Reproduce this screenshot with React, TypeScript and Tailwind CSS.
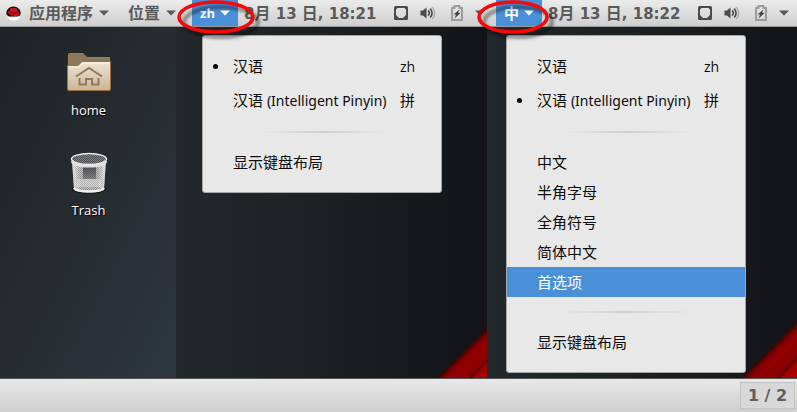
import clsx from "clsx";

const LAYOUT_LABEL = "显示键盘布局";

const Caret = ({ className = "" }: any) => {
  return (
    <svg viewBox="0 0 10 6" className={`w-[10px] h-[6px] shrink-0 ${className}`}>
      <path d="M0 0.5h10L5 5.5z" fill="currentColor" />
    </svg>
  );
};

const HatLogo = () => {
  return (
    <svg viewBox="0 0 15 15" className="w-[15px] h-[15px] shrink-0">
      <path d="M0.3 7.500C0.3 3.500 3.500 0.5 7.5 0.5S14.7 3.500 14.7 7.500L13.500 10.500 1.500 10.500z" fill="#1c0709" />
      <path d="M0.800 8.800C3 12.500 9 12.500 14.200 9.500 13.400 13 10.900 14.700 7.5 14.700 3.900 14.700 1.100 12 0.800 8.800z" fill="#fff" />
      <path
        d="M4.200 2.800C5 1.400 6.400 2.200 7.300 2c1-.5 2.600-.4 3.400.7.6.9.9 2.200 1.100 3.400 1.300.6 2.200 1.500 2 2.400-.5 1.800-4.300 2-7.100 1.100C4.300 8.900 1.800 7.500 1.700 6.200c0-.9 1-1.100 1.900-1z"
        fill="#c8141e"
      />
      <path d="M3.600 5.400c.8 1.300 4.500 2.400 7.400 1.600" stroke="#5a0a0e" strokeWidth="0.800" fill="none" />
    </svg>
  );
};

const TrayIcons = () => {
  return (
    <>
      <button aria-label="Display" className="w-[14px] ml-[18px] shrink-0">
        <svg viewBox="0 0 14 14" className="w-[14px] h-[14px]">
          <rect x="1" y="1" width="12" height="12" rx="0.500" fill="none" stroke="#4a4a4a" strokeWidth="2" />
          <path d="M2 2h1.500L2 3.500zM12 2h-1.500L12 3.500zM2 12V9l3 3zM12 12V9l-3 3z" fill="#4a4a4a" />
        </svg>
      </button>
      <button aria-label="Volume" className="w-[16px] ml-[12px] shrink-0">
        <svg viewBox="0 0 16 14" className="w-[16px] h-[14px]">
          <path d="M0.500 4.500H3L6.500 1.500v11L3 9.500H0.500z" fill="#4a4a4a" />
          <g fill="none" strokeWidth="1.600">
            <path d="M8 4.500a3 3 0 0 1 0 5" stroke="#4a4a4a" />
            <path d="M10.200 2.500a6.500 6.500 0 0 1 0 9" stroke="#4a4a4a" />
            <path d="M12.200 1a9 9 0 0 1 0 12" stroke="#b0b0b0" />
          </g>
        </svg>
      </button>
      <button aria-label="Battery" className="w-[12px] ml-[15px] shrink-0">
        <svg viewBox="0 0 12 16" className="w-[12px] h-[16px]">
          <path d="M1 3h2.500V1h5v2H11v12H1z" fill="none" stroke="#9c9c9c" strokeWidth="2" />
          <path d="M8.500 4.500L2.500 9.500h2.400L3.800 13.200l5.900-5.400H7z" fill="#444" />
        </svg>
      </button>
      <Caret className="ml-[12px] text-[#555]" />
    </>
  );
};

const Ring = ({ rx = 36, className = "" }: any) => {
  return (
    <svg
      viewBox="0 0 96 44"
      className={`absolute top-0 z-20 w-[96px] h-[44px] max-w-none pointer-events-none ${className}`}
    >
      <defs>
        <filter id="ring-shadow" x="-10%" y="-20%" width="120%" height="150%">
          <feGaussianBlur stdDeviation="1.500" />
        </filter>
      </defs>
      <ellipse
        cx="50"
        cy="22"
        rx={rx}
        ry="15"
        fill="none"
        stroke="#000"
        strokeOpacity="0.4"
        strokeWidth="4"
        filter="url(#ring-shadow)"
      />
      <ellipse cx="45" cy="17" rx={rx} ry="15" fill="none" stroke="#fb0707" strokeWidth="3.500" />
    </svg>
  );
};

const StatusBar = ({ label, time, ring, className = "" }: any) => {
  return (
    <div className={`flex items-center min-w-0 ${className}`}>
      <div className="relative self-stretch shrink-0">
        <button className="flex items-center justify-center gap-[5px] w-[46px] h-full bg-[#4a90d9] text-white text-[13px] leading-[20px]">
          {label}
          <Caret />
        </button>
        {ring}
      </div>
      <div className="w-[132px] ml-[6px] shrink-0 whitespace-nowrap">
        <Digits>8</Digits>月<Digits> 13 </Digits>日<Digits>, {time}</Digits>
      </div>
      <TrayIcons />
    </div>
  );
};

const Digits = ({ children }: any) => {
  return <span className="font-['DejaVu_Sans',sans-serif] text-[15px]">{children}</span>;
};

const Separator = () => {
  return (
    <div className="h-[30px] flex items-center justify-center" role="separator">
      <div className="w-[130px] h-[2px] bg-linear-to-r from-transparent via-[#cfcfcf] to-transparent" />
    </div>
  );
};

const SourceItem = ({ name, code, active = false }: any) => {
  return (
    <button className="flex items-center w-full h-[34px] pl-[8px] pr-[25px] text-left">
      <span className="w-[22px] flex">
        {active && <span className="w-[5px] h-[5px] ml-[2px] rounded-full bg-black" />}
      </span>
      <span className="flex-1 whitespace-nowrap">{name}</span>
      <span className="w-[16px]">{code}</span>
    </button>
  );
};

const MenuItem = ({ children, selected = false }: any) => {
  return (
    <button
      className={clsx(
        "block w-full h-[30px] pl-[30px] text-left",
        selected && "bg-[#4a90d9] text-white"
      )}
    >
      {children}
    </button>
  );
};

const InputMenu = ({ active, items = [], className = "" }: any) => {
  return (
    <div
      className={`relative z-10 w-[240px] mt-[8px] pt-[13px] pb-[15px] rounded-[3px] border border-[#a8a8a8] bg-[#e8e8e8] text-[15px] leading-[20px] text-[#0c0c0c] ${className}`}
    >
      <SourceItem name="汉语" code={<span className="text-[14px]">zh</span>} active={active === 0} />
      <SourceItem
        name={
          <>
            汉语 <span className="font-['Noto_Sans',sans-serif] text-[14px]">(Intelligent Pinyin)</span>
          </>
        }
        code="拼"
        active={active === 1}
      />
      <Separator />
      {items.map((item: string) => (
        <MenuItem key={item} selected={item === "首选项"}>
          {item}
        </MenuItem>
      ))}
      {items.length > 0 && <Separator />}
      <MenuItem>{LAYOUT_LABEL}</MenuItem>
    </div>
  );
};

const RedCorner = ({ className = "" }: any) => {
  return (
    <svg viewBox="0 0 56 56" className={`absolute bottom-0 ${className}`}>
      <defs>
        <linearGradient id="stripe" x1="0.5" y1="0.5" x2="1" y2="1">
          <stop offset="0" stopColor="#3a0304" />
          <stop offset="0.15" stopColor="#850000" />
          <stop offset="0.3" stopColor="#920000" />
          <stop offset="0.6" stopColor="#8a0000" />
          <stop offset="0.68" stopColor="#5c0000" />
          <stop offset="0.7" stopColor="#a00000" />
          <stop offset="1" stopColor="#b00000" />
        </linearGradient>
      </defs>
      <path d="M0 56L56 0V56z" fill="url(#stripe)" />
    </svg>
  );
};

const FolderIcon = () => {
  return (
    <svg viewBox="0 0 44 40" className="w-[44px] h-[40px]">
      <defs>
        <linearGradient id="folder" x1="0" y1="0" x2="0" y2="1">
          <stop offset="0" stopColor="#eee3d5" />
          <stop offset="1" stopColor="#ccb597" />
        </linearGradient>
      </defs>
      <path d="M1.500 14V2.500q0-1 1-1H16l4 4h22.500V16h-41z" fill="#8b7759" stroke="#a47c4d" />
      <path d="M0.500 13.500H11l4-4h28.500V37q0 1.500-1.500 1.500H2q-1.500 0-1.500-1.500z" fill="url(#folder)" stroke="#9c7140" />
      <path d="M2 15h10l4-4h26" fill="none" stroke="#fff8ec" />
      <path
        d="M9 24.500L22 16l13 8.500M12.500 26v6.500H19V27h6v5.500h6.500V26"
        fill="none"
        stroke="#8f7b5b"
        strokeWidth="2"
      />
    </svg>
  );
};

const TrashIcon = () => {
  return (
    <svg viewBox="0 0 38 42" className="w-[38px] h-[42px]">
      <defs>
        <pattern id="mesh" width="2" height="2" patternUnits="userSpaceOnUse">
          <rect width="2" height="2" fill="#c6c6c6" />
          <rect width="1" height="1" fill="#8e8e8e" />
          <rect x="1" y="1" width="1" height="1" fill="#8e8e8e" />
        </pattern>
        <pattern id="mesh-dark" width="2" height="2" patternUnits="userSpaceOnUse">
          <rect width="2" height="2" fill="#808484" />
          <rect width="1" height="1" fill="#4a4e50" />
          <rect x="1" y="1" width="1" height="1" fill="#4a4e50" />
        </pattern>
        <linearGradient id="can" x1="0" y1="0" x2="1" y2="0">
          <stop offset="0" stopColor="#fff" stopOpacity="0.700" />
          <stop offset="0.25" stopColor="#fff" stopOpacity="0" />
          <stop offset="0.75" stopColor="#fff" stopOpacity="0" />
          <stop offset="1" stopColor="#fff" stopOpacity="0.700" />
        </linearGradient>
        <linearGradient id="shade" x1="0" y1="0" x2="0" y2="1">
          <stop offset="0" stopColor="#33383c" stopOpacity="0.850" />
          <stop offset="1" stopColor="#33383c" stopOpacity="0.400" />
        </linearGradient>
      </defs>
      <ellipse cx="19" cy="37" rx="17" ry="4.500" fill="#111" />
      <path d="M2 8L4 37c1 5 29 5 30 0L36 8z" fill="url(#mesh)" />
      <path d="M7 27h24v8H7z" fill="#fff" opacity="0.300" />
      <path d="M2 8L4 37c1 5 29 5 30 0L36 8z" fill="url(#can)" />
      <path d="M13 13h13v14H13z" fill="url(#shade)" />
      <path d="M4 36c2 4.500 28 4.500 30 0" stroke="#f0f0f0" strokeWidth="2.400" fill="none" />
      <ellipse cx="19" cy="7" rx="17.500" ry="5.500" fill="url(#mesh-dark)" stroke="#eee" strokeWidth="1.400" />
      <path d="M2 9c3 6.500 31 6.500 34 0" stroke="#e2e2e2" strokeWidth="3" fill="none" />
    </svg>
  );
};

const DesktopIcon = ({ icon, label, className = "" }: any) => {
  return (
    <button
      className={`flex flex-col items-center text-[13px] leading-[18px] text-white [text-shadow:1px_1px_1px_#000] ${className}`}
    >
      {icon}
      <span>{label}</span>
    </button>
  );
};

const App = () => {
  return (
    <div className="min-h-screen flex flex-col overflow-hidden bg-[#16191c] font-['Open_Sans','Noto_Sans_CJK_SC',sans-serif]">
      <header className="grid grid-cols-[176fr_311fr_310fr] h-[27px] border-b border-[#999] bg-linear-to-b from-[#ebebeb] to-[#cfcfcf] text-[16px] leading-[20px] font-bold text-[#5a5a5a]">
        <nav className="flex items-center pl-[6px] whitespace-nowrap">
          <HatLogo />
          <button className="flex items-center gap-[6px] ml-[8px]">
            应用程序
            <Caret />
          </button>
          <button className="flex items-center gap-[6px] ml-[19px]">
            位置
            <Caret />
          </button>
        </nav>
        <StatusBar
          label="zh"
          time="18:21"
          ring={<Ring rx={37} className="left-[-21px]" />}
          className="pl-[16px]"
        />
        <StatusBar
          label={<span className="text-[15px]">中</span>}
          time="18:22"
          ring={<Ring rx={34} className="left-[-28px]" />}
          className="pl-[9px]"
        />
      </header>

      <main className="grid grid-cols-[176fr_311fr_310fr] flex-1">
        <section className="flex flex-col items-center pl-px bg-linear-to-br from-[#1e2326] via-[#262c31] to-[#2e363f]">
          <DesktopIcon icon={<FolderIcon />} label="home" className="mt-[25px] gap-[9px]" />
          <DesktopIcon icon={<TrashIcon />} label="Trash" className="mt-[33px] gap-[7px]" />
        </section>
        <section className="relative pl-[26px] bg-linear-to-r from-[#22282b] via-[#1c2023] to-[#121417]">
          <InputMenu active={0} />
          <RedCorner className="right-0 w-[50px] h-[50px]" />
          <div className="absolute bottom-0 left-0 w-[80px] h-px bg-[#5c1215]" />
        </section>
        <section className="relative pl-[19px] bg-linear-to-r from-[#22282b] via-[#1c2023] to-[#121417]">
          <InputMenu active={1} items={["中文", "半角字母", "全角符号", "简体中文", "首选项"]} />
          <RedCorner className="right-0 w-[56px] h-[56px]" />
        </section>
      </main>

      <footer className="flex justify-end items-center h-[34px] pr-[2px] border-t border-[#555] bg-linear-to-b from-[#e8e8e8] to-[#cfcfcf]">
        <button className="w-[55px] h-[27px] border border-[#c2c2c2] bg-[#d8d8d8] text-[16px] leading-[20px] font-bold font-['DejaVu_Sans',sans-serif] text-[#5f5f5f]">
          1 / 2
        </button>
      </footer>
    </div>
  );
};

export default App;
